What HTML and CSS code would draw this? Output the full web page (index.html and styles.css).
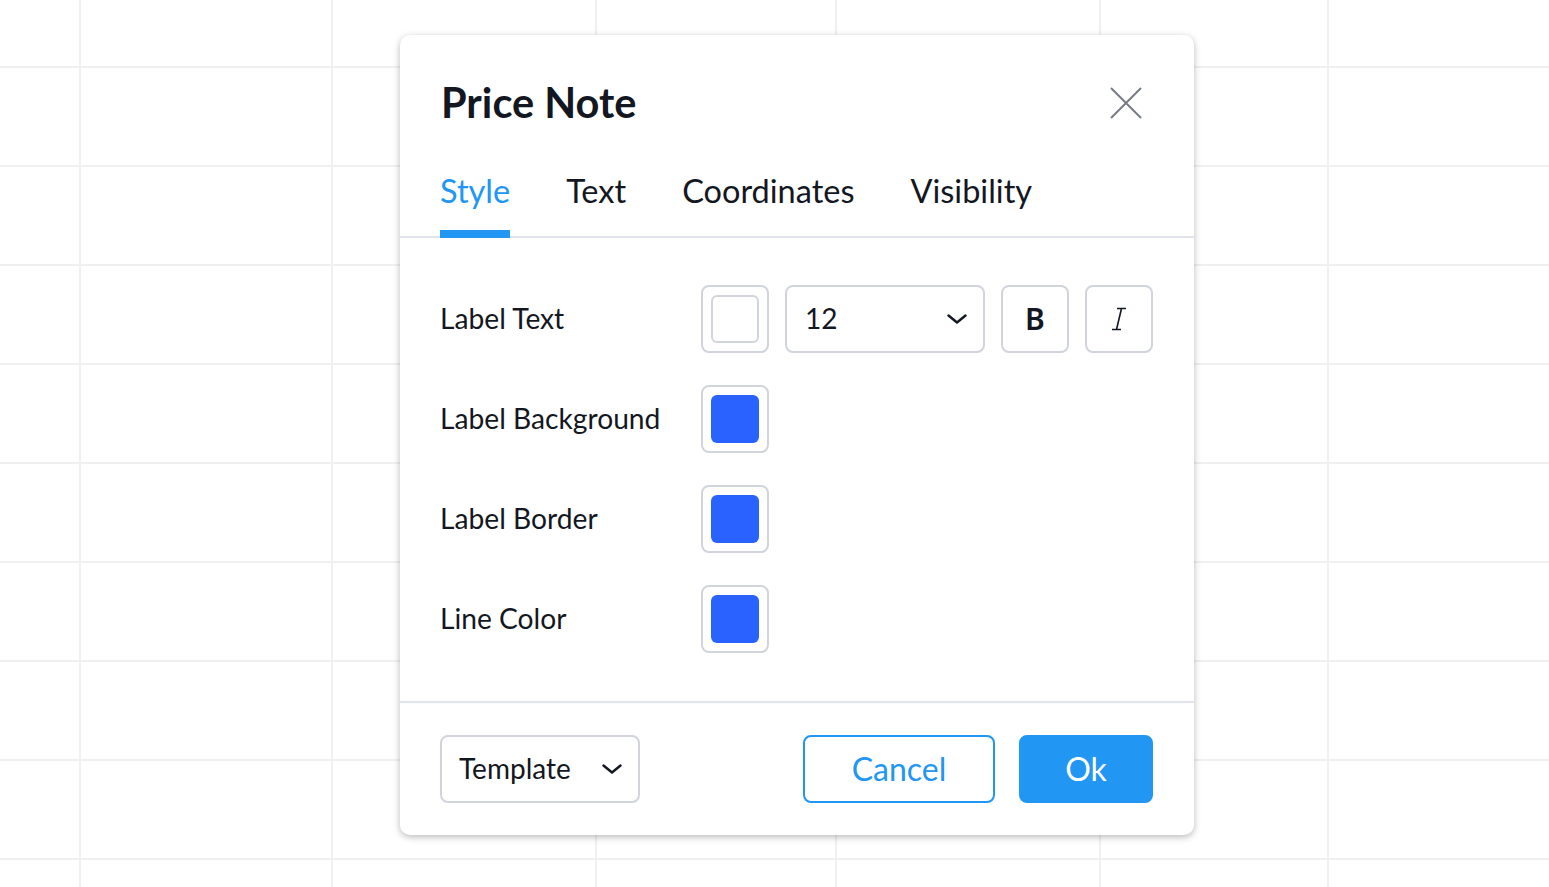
FILE: index.html
```
<!DOCTYPE html>
<html lang="en">
<head>
<meta charset="utf-8">
<title>Price Note</title>
<link rel="stylesheet" href="styles.css">
</head>
<body>
<div class="chart">
  <div class="col c1"></div>
  <div class="col c2"></div>
  <div class="col c3"></div>
  <div class="col c4"></div>
  <div class="col c5"></div>
  <div class="col c6"></div>
  <div class="col c7"></div>
</div>

<div class="dialog">
  <div class="header">
    <div class="title">Price Note</div>
    <button class="close" aria-label="Close">
      <svg width="32" height="32" viewBox="0 0 32 32"><path d="M1 1L31 31M31 1L1 31" stroke="#787b86" stroke-width="2" fill="none"/></svg>
    </button>
  </div>
  <div class="tabs">
    <div class="tab active">Style</div>
    <div class="tab">Text</div>
    <div class="tab">Coordinates</div>
    <div class="tab">Visibility</div>
  </div>
  <div class="content">
    <div class="row">
      <div class="label">Label Text</div>
      <div class="controls">
        <div class="swatch-box"><div class="swatch white"></div></div>
        <div class="select size">
          <span>12</span>
          <svg width="20" height="10" viewBox="0 0 20 10"><path d="M1.5 1.5L10 8.5L18.5 1.5" stroke="#131722" stroke-width="2.4" fill="none" stroke-linecap="round" stroke-linejoin="round"/></svg>
        </div>
        <div class="icon-btn bold">B</div>
        <div class="icon-btn">
          <svg width="16" height="24" viewBox="0 0 16 24"><path d="M6 1.5H15M1 22.5H10M10.5 1.5L5.5 22.5" stroke="#131722" stroke-width="1.6" fill="none"/></svg>
        </div>
      </div>
    </div>
    <div class="row">
      <div class="label">Label Background</div>
      <div class="controls">
        <div class="swatch-box"><div class="swatch blue"></div></div>
      </div>
    </div>
    <div class="row">
      <div class="label">Label Border</div>
      <div class="controls">
        <div class="swatch-box"><div class="swatch blue"></div></div>
      </div>
    </div>
    <div class="row">
      <div class="label">Line Color</div>
      <div class="controls">
        <div class="swatch-box"><div class="swatch blue"></div></div>
      </div>
    </div>
  </div>
  <div class="footer">
    <div class="select template">
      <span>Template</span>
      <svg width="20" height="10" viewBox="0 0 20 10"><path d="M1.5 1.5L10 8.5L18.5 1.5" stroke="#131722" stroke-width="2.4" fill="none" stroke-linecap="round" stroke-linejoin="round"/></svg>
    </div>
    <div class="actions">
      <button class="btn cancel">Cancel</button>
      <button class="btn ok">Ok</button>
    </div>
  </div>
</div>
</body>
</html>
```
FILE: styles.css
```
* { box-sizing: border-box; }
html, body { margin: 0; padding: 0; }
body {
  width: 1549px;
  height: 887px;
  overflow: hidden;
  background: #ffffff;
  font-family: Lato, "Open Sans", sans-serif;
  color: #131722;
}
.chart {
  display: flex;
  width: 100%;
  height: 887px;
  background-image: linear-gradient(to bottom, #f0f0f0 0, #f0f0f0 2px, transparent 2px);
  background-size: 100% 99px;
  background-position: 0 66px;
}
.col { height: 100%; border-right: 2px solid #f0f0f0; flex: none; }
.c1 { width: 81px; }
.c2 { width: 252px; }
.c3 { width: 264px; }
.c4 { width: 240px; }
.c5 { width: 264px; }
.c6 { width: 228px; }
.c7 { flex: 1; border-right: none; }

.dialog {
  position: absolute;
  left: 400px;
  top: 35px;
  width: 794px;
  background: #ffffff;
  border-radius: 10px;
  box-shadow: 0 2px 7px rgba(0, 0, 0, 0.28);
}
.header {
  display: flex;
  align-items: center;
  justify-content: space-between;
  height: 104px;
  padding: 32px 52px 0 41px;
}
.title {
  font-size: 41.5px;
  font-weight: 700;
  line-height: 48px;
  padding-bottom: 2px;
}
.close {
  border: none;
  background: none;
  padding: 0;
  width: 32px;
  height: 32px;
  display: flex;
}
.tabs {
  display: flex;
  gap: 56px;
  margin-top: 32px;
  padding: 0 40px;
  border-bottom: 2px solid #e0e3eb;
}
.tab {
  font-size: 32.5px;
  line-height: 40px;
  padding-bottom: 19px;
  border-bottom: 8px solid transparent;
  margin-bottom: -2px;
}
.tab.active {
  color: #2196f3;
  border-bottom-color: #2196f3;
}
.content {
  display: flex;
  flex-direction: column;
  gap: 32px;
  padding: 47px 40px 48px;
}
.row {
  display: flex;
  align-items: center;
  height: 68px;
}
.label {
  width: 261px;
  font-size: 28.2px;
  line-height: 34px;
  padding-bottom: 2px;
}
.controls {
  display: flex;
  gap: 16px;
}
.swatch-box {
  width: 68px;
  height: 68px;
  border: 2px solid #d1d4dc;
  border-radius: 8px;
  display: flex;
  align-items: center;
  justify-content: center;
}
.swatch {
  width: 48px;
  height: 48px;
  border-radius: 6px;
}
.swatch.white { background: #ffffff; border: 2px solid #d1d4dc; }
.swatch.blue { background: #2962ff; }
.select {
  height: 68px;
  border: 2px solid #d1d4dc;
  border-radius: 8px;
  display: flex;
  align-items: center;
  justify-content: space-between;
  padding: 0 16px 2px 17px;
  font-size: 28px;
}
.select.size { width: 200px; padding-left: 18px; }
.select.template { width: 200px; }
.select svg { display: block; margin-top: 2px; }
.icon-btn {
  width: 68px;
  height: 68px;
  border: 2px solid #d1d4dc;
  border-radius: 8px;
  display: flex;
  align-items: center;
  justify-content: center;
}
.icon-btn.bold {
  font-family: "Noto Sans", sans-serif;
  font-size: 30px;
  font-weight: 600;
  padding-bottom: 2px;
}
.footer {
  display: flex;
  justify-content: space-between;
  align-items: center;
  border-top: 2px solid #e0e3eb;
  padding: 32px 41px 32px 40px;
}
.actions {
  display: flex;
  gap: 24px;
}
.btn {
  height: 68px;
  border-radius: 8px;
  font-family: Lato, "Open Sans", sans-serif;
  font-size: 32px;
  border: 2px solid #2196f3;
  padding: 0 0 2px;
}
.btn.cancel { width: 192px; background: #ffffff; color: #2196f3; }
.btn.ok { width: 134px; background: #2196f3; color: #ffffff; }
```
